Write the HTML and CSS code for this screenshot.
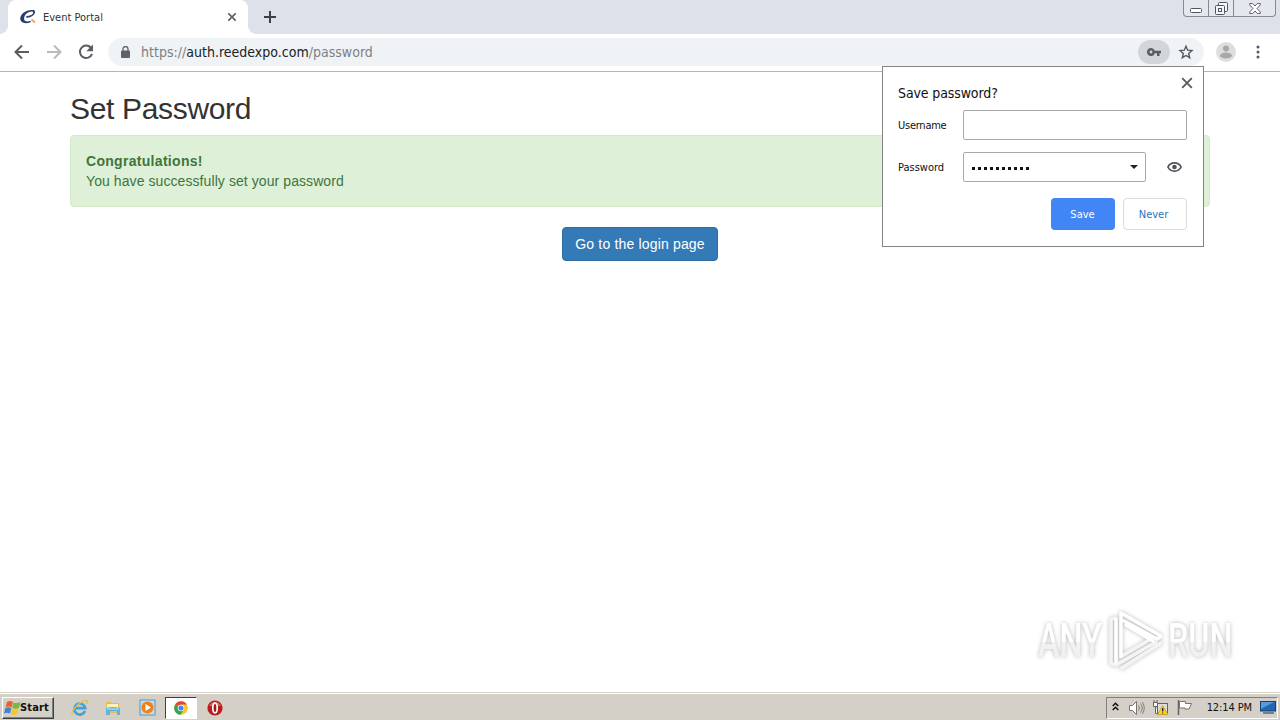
FILE: index.html
```html
<!DOCTYPE html>
<html lang="en">
<head>
    <meta charset="UTF-8">
    <title>Event Portal</title>
    <link rel="stylesheet" href="styles.css">
</head>
<body>
    <div class="tabstrip">
        <div class="tab">
            <svg class="favicon" width="16" height="16" viewBox="0 0 16 16">
                <path d="M13.500 1C8 .2 1 3.500.3 9c-.5 5 5.500 6.500 10.700 4l-.6-1.300c-3 1.300-6.400.8-6.300-2C4.200 5.500 8 2.500 12 2.500c2 0 1 2.500-1 3.600-1.500.8-3.300 1-4.400 1L6 8.600C11 9 15 6 15 3c0-1-.5-1.700-1.500-2z" fill="#263d70"/>
                <path d="M11.500 10.500l3.500 3" stroke="#f0a35a" stroke-width="1.800"/>
            </svg>
            <span class="tab-title">Event Portal</span>
            <svg class="tab-close" width="10" height="10" viewBox="0 0 10 10"><path d="M1.300 1.300l7.400 7.400M8.700 1.300L1.300 8.700" stroke="#5f6368" stroke-width="1.700"/></svg>
        </div>
        <svg class="new-tab" width="12" height="12" viewBox="0 0 12 12"><path d="M6 0v12M0 6h12" stroke="#3c4043" stroke-width="2"/></svg>
        <div class="window-buttons">
            <span class="win-min"><svg width="12" height="5" viewBox="0 0 12 5"><rect x=".5" y=".5" width="11" height="4" rx="1" fill="#fff" stroke="#50545c"/></svg></span>
            <span class="win-max"><svg width="13" height="13" viewBox="0 0 13 13" fill="#f5f6f8" stroke="#50545c"><rect x="3.500" y=".5" width="9" height="9" rx="1"/><rect x=".5" y="3.500" width="9" height="9" rx="1"/><rect x="3.500" y="6.500" width="3" height="3"/></svg></span>
            <span class="win-close"><svg width="12" height="11" viewBox="0 0 12 11"><path d="M.7.500h3L6 3 8.300.500h3v1.500L8 5.500l3.300 3.500v1.500h-3L6 8l-2.300 2.500h-3V9L4 5.500.7 2z" fill="#fff" stroke="#50545c" stroke-width=".9"/></svg></span>
        </div>
    </div>

    <div class="toolbar">
        <svg class="nav" width="24" height="24" viewBox="0 0 24 24"><path d="M19 12H6M12 5.500L5.500 12l6.500 6.500" fill="none" stroke="#5a5d61" stroke-width="2"/></svg>
        <svg class="nav" width="24" height="24" viewBox="0 0 24 24"><path d="M5 12h13M12 5.500l6.500 6.500-6.500 6.500" fill="none" stroke="#bababa" stroke-width="2"/></svg>
        <svg class="nav" width="24" height="24" viewBox="0 0 24 24"><path d="M17.200 8.200A6.200 6.200 0 1 0 18 13.800" fill="none" stroke="#5a5d61" stroke-width="2"/><path d="M19 4.500v6.700h-6.700z" fill="#5a5d61"/></svg>
        <div class="omnibox">
            <svg class="lock" width="10" height="13" viewBox="0 0 10 13"><rect x="1" y="4.500" width="9" height="7.500" rx="1" fill="#5f6368"/><path d="M3 5V3a2.500 2.500 0 0 1 5 0v2" fill="none" stroke="#5f6368" stroke-width="1.300"/></svg>
            <span class="url">https://<b>auth.reedexpo.com</b>/password</span>
            <span class="key">
                <svg width="14" height="8" viewBox="0 0 14 8"><path fill-rule="evenodd" d="M4 0a4 4 0 1 0 3.800 5.200H10V8h2.500V5.200H14V2.700H7.800A4 4 0 0 0 4 0zm0 2.600a1.400 1.400 0 1 1 0 2.800 1.400 1.400 0 0 1 0-2.800z" fill="#5a5d61"/></svg>
            </span>
            <svg class="star" width="16" height="16" viewBox="0 0 16 16"><path d="M8 2.200l1.700 4 4.300.4-3.300 2.900 1 4.200L8 11.500l-3.700 2.200 1-4.200L2 6.600l4.300-.4z" fill="none" stroke="#55585c" stroke-width="1.400"/></svg>
        </div>
        <svg class="avatar" width="20" height="20" viewBox="0 0 20 20"><circle cx="10" cy="10" r="10" fill="#dedede"/><circle cx="10" cy="6.500" r="3" fill="#a8a8a8"/><ellipse cx="10" cy="13.500" rx="6" ry="3" fill="#a8a8a8"/></svg>
        <svg class="menu" width="4" height="14" viewBox="0 0 4 14" fill="#55585c"><circle cx="2" cy="2" r="1.500"/><circle cx="2" cy="7" r="1.500"/><circle cx="2" cy="12" r="1.500"/></svg>
    </div>

    <main class="page">
        <div class="container">
            <h2>Set Password</h2>
            <div class="alert">
                <strong>Congratulations!</strong>
                <span>You have successfully set your password</span>
            </div>
            <a class="btn-login">Go to the login page</a>
        </div>
    </main>

    <!-- Save password bubble -->
    <div class="bubble">
        <svg class="bubble-close" width="12" height="12" viewBox="0 0 12 12"><path d="M1.200 1.200l9.600 9.600M10.800 1.200l-9.600 9.600" stroke="#55585c" stroke-width="1.800"/></svg>
        <div class="bubble-title">Save password?</div>
        <div class="field">
            <span class="label label-user">Username</span>
            <div class="box"></div>
        </div>
        <div class="field">
            <span class="label">Password</span>
            <div class="box box-pass">
                <div class="dots"><i></i><i></i><i></i><i></i><i></i><i></i><i></i><i></i><i></i><i></i></div>
                <svg width="8" height="4" viewBox="0 0 8 4"><path d="M0 0h8L4 4z" fill="#222"/></svg>
            </div>
            <svg class="eye" width="15" height="10" viewBox="0 0 15 10"><path d="M.9 5C2.200 2.300 4.700.9 7.500.9S12.800 2.300 14.100 5C12.800 7.700 10.300 9.100 7.500 9.100S2.200 7.700.9 5z" fill="#fff" stroke="#505357" stroke-width="1.700"/><circle cx="7.500" cy="5" r="2.300" fill="#505357"/></svg>
        </div>
        <div class="actions">
            <span class="btn save">Save</span>
            <span class="btn never">Never</span>
        </div>
    </div>

    <div class="watermark">
        <div class="wm-text"><span>ANY</span></div>
        <svg width="60" height="66" viewBox="0 0 60 66" fill="none" stroke-width="3.500" stroke-linejoin="round" stroke-linecap="round">
            <path d="M8 10L5 11.500v44l5 1.500L50 34M16 60l39-25M15 48.500L45 31" stroke="#f4f4f4"/>
            <path d="M15 48V5l40 23-4 3-33-18M10 54V11M20 17l27 16" stroke="#fff"/>
        </svg>
        <div class="wm-text"><span>RUN</span></div>
    </div>

    <div class="taskbar">
        <div class="start">
            <svg width="17" height="16" viewBox="0 0 17 16">
                <path d="M3 2Q5.500 0 9 2L7.600 7.500Q4.500 5.600 1.400 7.500z" fill="#e8632b"/>
                <path d="M9.600 2.400q3.200 1.600 7-.7L15 7.700q-3.500 1.800-6.800.2z" fill="#79b843"/>
                <path d="M1.200 8.200q3.200-1.700 6.200 0L6 13.500Q3 11.800 0 13.500z" fill="#4284cf"/>
                <path d="M8 8.500q3.300 1.700 6.800-.1l-1.500 5.600q-3.300 1.900-6.700 0z" fill="#f7c52f"/>
            </svg>
            <span>Start</span>
        </div>
        <div class="quick">
            <span class="app">
                <svg width="17" height="17" viewBox="0 0 17 17"><path d="M14 12A5.500 5.500 0 1 1 14.300 9.200H4" fill="none" stroke="#3da3df" stroke-width="2.700"/><path d="M1.500 15.500C-1 12 10 1 16 1.500c1 .5.500 2-.5 3.500" fill="none" stroke="#e9bd43" stroke-width="1.300"/></svg>
            </span>
            <span class="app">
                <svg width="16" height="16" viewBox="0 0 16 16"><path d="M1 2h5l1 1h7v10H1z" fill="#dfbf5c"/><path d="M2 4h11v4H2z" fill="#fff2b2"/><path d="M1 8q7-2 14 0v7h-3v-4H5v4H1z" fill="#63b3dc"/><path d="M2 9h12" stroke="#b9e7f7"/></svg>
            </span>
            <span class="app">
                <svg width="17" height="17" viewBox="0 0 17 17"><rect x="1" y="1" width="15" height="15" fill="#c3dcec" stroke="#5a94bf"/><circle cx="8.500" cy="8.500" r="6" fill="#ee8118"/><path d="M6.500 5v7l5.500-3.500z" fill="#fff"/></svg>
            </span>
            <span class="app active">
                <svg width="14" height="14" viewBox="0 0 14 14"><circle cx="7" cy="7" r="6.800" fill="#f6c62f"/><path d="M7 7L1.100 3.600A6.800 6.800 0 0 0 6.500 13.800L9.500 9z" fill="#36a552"/><path d="M7 7L1.100 3.600A6.800 6.800 0 0 1 12.900 3.600H7z" fill="#df4938"/><circle cx="7" cy="7" r="3.300" fill="#fff"/><circle cx="7" cy="7" r="2.600" fill="#4a87e5"/></svg>
            </span>
            <span class="app">
                <svg width="16" height="16" viewBox="0 0 16 16"><circle cx="8" cy="8" r="7.600" fill="#b81e1e"/><path d="M2 6a6.500 6.500 0 0 1 12 0z" fill="#d96158"/><ellipse cx="8" cy="8" rx="2.200" ry="4.800" fill="#a31616" stroke="#fff" stroke-width="1.700"/></svg>
            </span>
        </div>
        <div class="tray">
            <svg class="chevron" width="7" height="9" viewBox="0 0 7 9"><path d="M.7 4l2.800-2.800L6.300 4M.7 8l2.800-2.800L6.300 8" fill="none" stroke="#111" stroke-width="1.500"/></svg>
            <svg class="volume" width="17" height="16" viewBox="0 0 17 16"><path d="M1.500 5.500h3l4-4v13l-4-4h-3z" fill="#fff" stroke="#77736d"/><path d="M10.500 5.500q2 2.500 0 5M12.500 3.500q3.500 4.500 0 9M14.300 2q4 6 0 12" fill="none" stroke="#85817a"/></svg>
            <svg class="network" width="17" height="16" viewBox="0 0 17 16"><path d="M2 0v3M5 0v3" stroke="#666"/><path d="M1.500 2.500h4v4h-4zM3.500 6.500v7H6" fill="#fff" stroke="#66635e"/><rect x="5.500" y="3.500" width="10" height="9" fill="#ddd" stroke="#66635e"/><path d="M10.500 5.500L16 14.500H5.500z" fill="#f8d52b" stroke="#c2940d" stroke-width=".7"/><path d="M10.700 8v3.500M10.700 12.500v1" stroke="#222" stroke-width="1.300"/></svg>
            <svg class="flag" width="16" height="15" viewBox="0 0 16 15"><path d="M1.500 0v15" stroke="#66635e" stroke-width="1.500"/><path d="M2.500 1.500h6v2h6l-2.500 5.500H8V8H2.500z" fill="#fff" stroke="#77736d"/></svg>
            <span class="clock">12:14 PM</span>
            <svg class="desktop" width="16" height="13" viewBox="0 0 16 13"><rect x=".5" y=".5" width="15" height="9.500" fill="#2367b2" stroke="#173f78"/><path d="M1 1h13L1 8z" fill="#559bdd"/><path d="M3 12h11" stroke="#5b6470" stroke-width="1.500"/></svg>
        </div>
    </div>
</body>
</html>
```
FILE: styles.css
```css
* {
    box-sizing: border-box;
}

body {
    display: flex;
    flex-direction: column;
    width: 1280px;
    height: 720px;
    margin: 0;
    overflow: hidden;
    background: #fff;
    color: #111;
    font-family: "DejaVu Sans Condensed", "DejaVu Sans", sans-serif;
    font-size: 11px;
}

svg {
    display: block;
    flex: none;
}

span {
    white-space: nowrap;
}

/* Browser */
.tabstrip {
    display: flex;
    align-items: center;
    height: 34px;
    padding-left: 8px;
    background: #dee1e9;
}

.tab {
    position: relative;
    display: flex;
    align-items: center;
    width: 240px;
    height: 34px;
    padding: 0 11px 0 12px;
    border-radius: 8px 8px 0 0;
    background: #fff;
}

.tab::before,
.tab::after {
    content: "";
    position: absolute;
    bottom: 0;
    width: 8px;
    height: 8px;
}

.tab::before {
    left: -8px;
    background: radial-gradient(circle at 0 0, #dee1e9 7.5px, #fff 8px);
}

.tab::after {
    right: -8px;
    background: radial-gradient(circle at 100% 0, #dee1e9 7.5px, #fff 8px);
}

.tab-title {
    margin-left: 7px;
    color: #333;
}

.tab-close {
    margin-left: auto;
}

.new-tab {
    margin-left: 16px;
}

.window-buttons {
    display: flex;
    align-self: flex-start;
    width: 93px;
    height: 17px;
    margin: 0 4px 0 auto;
    border: 1px solid #858992;
    border-top: 0;
    border-radius: 0 0 4px 4px;
    background: #e4e7ed;
}

.window-buttons span {
    display: flex;
    align-items: center;
    justify-content: center;
    padding-top: 1px;
}

.win-min {
    width: 25px;
    border-right: 1px solid #858992;
}

.win-min svg {
    margin-top: 4px;
}

.win-max {
    width: 25px;
    border-right: 1px solid #858992;
}

.win-close {
    flex: 1;
}

.toolbar {
    display: flex;
    align-items: center;
    height: 38px;
    padding: 0 20px 2px 10px;
    border-bottom: 1px solid #b5b5b5;
}

.nav {
    margin-right: 8px;
}

.omnibox {
    display: flex;
    align-items: center;
    width: 1096px;
    height: 28px;
    margin-left: 2px;
    padding: 0 14px 0 12px;
    border-radius: 14px;
    background: #f0f3f5;
}

.lock {
    margin-top: 1px;
}

.url {
    margin-left: 11px;
    color: #7c8085;
    font-size: 14px;
    letter-spacing: 0.01px;
}

.url b {
    color: #202124;
    font-weight: normal;
}

.key {
    display: flex;
    align-items: center;
    justify-content: center;
    width: 32px;
    height: 24px;
    margin-left: auto;
    border-radius: 12px;
    background: #d3d6d8;
}

.star {
    margin-left: 8px;
    margin-right: -4px;
}

.avatar {
    margin-left: 12px;
}

.menu {
    margin-left: auto;
}

/* Page */
.page {
    flex: 1;
    font-family: "Liberation Sans", Arial, sans-serif;
}

.container {
    display: flex;
    flex-direction: column;
    width: 1140px;
    margin: 0 auto;
}

h2 {
    margin: 20px 0 10px;
    color: #333;
    font-size: 30px;
    font-weight: normal;
    letter-spacing: -0.33px;
    line-height: 33px;
}

.alert {
    display: flex;
    flex-direction: column;
    height: 72px;
    padding: 15px;
    border: 1px solid #d6e9c6;
    border-radius: 4px;
    background: #dff0d8;
    color: #3c763d;
    font-size: 14px;
    line-height: 20px;
}

.alert strong {
    letter-spacing: 0.3px;
}

.alert span {
    letter-spacing: 0.08px;
}

.btn-login {
    align-self: center;
    height: 34px;
    margin-top: 20px;
    padding: 6px 12px;
    border: 1px solid #2e6da4;
    border-radius: 4px;
    background: #337ab7;
    color: #fff;
    font-size: 14px;
    letter-spacing: 0.17px;
    line-height: 20px;
}

/* Bubble */
.bubble {
    position: absolute;
    top: 66px;
    left: 882px;
    width: 322px;
    height: 181px;
    padding: 18px 16px 0 15px;
    border: 1px solid #858585;
    background: #fff;
}

.bubble-close {
    position: absolute;
    top: 10px;
    right: 10px;
}

.bubble-title {
    margin-bottom: 9px;
    font-size: 14px;
    letter-spacing: -0.12px;
    line-height: 16px;
}

.field {
    display: flex;
    align-items: center;
    height: 30px;
    margin-bottom: 12px;
}

.label {
    width: 65px;
}

.label-user {
    letter-spacing: -0.25px;
}

.box {
    flex: 1;
    height: 30px;
    border: 1px solid #a9a9a9;
    border-radius: 2px;
}

.box-pass {
    display: flex;
    flex: none;
    align-items: center;
    justify-content: space-between;
    width: 183px;
    padding: 0 7px 0 8px;
}

.dots {
    display: flex;
    gap: 3px;
    margin-top: 3px;
}

.dots i {
    width: 3px;
    height: 3px;
    background: #111;
}

.eye {
    margin-left: 21px;
}

.actions {
    display: flex;
    justify-content: flex-end;
    gap: 8px;
    margin-top: 16px;
}

.btn {
    width: 64px;
    height: 32px;
    border-radius: 4px;
    line-height: 33px;
    text-align: center;
}

.save {
    padding-right: 1px;
    background: #4285f4;
    color: #fff;
}

.never {
    padding-right: 3px;
    border: 1px solid #dadce0;
    color: #2672c4;
    line-height: 31px;
}

/* Watermark */
.watermark {
    position: absolute;
    top: 608px;
    left: 1038px;
    display: flex;
    align-items: center;
    width: 196px;
    height: 66px;
    filter: drop-shadow(0 0 2px rgba(0, 0, 0, 0.28));
}

.wm-text {
    width: 66px;
    font-family: Roboto, sans-serif;
    font-size: 49px;
    font-weight: 500;
    line-height: 66px;
}

.wm-text span {
    display: inline-block;
    background: linear-gradient(#fff 52%, #f1f1f1 52%);
    -webkit-background-clip: text;
    background-clip: text;
    color: transparent;
    transform: scaleX(0.66);
    transform-origin: 0 50%;
}

.watermark svg {
    margin: 0 2px;
}

/* Taskbar */
.taskbar {
    display: flex;
    align-items: center;
    height: 28px;
    padding: 2px 2px 0 2px;
    border-top: 1px solid #d4d0c8;
    box-shadow: inset 0 1px #fff;
    background: #d4d0c8;
}

.start {
    display: flex;
    align-items: center;
    width: 52px;
    height: 22px;
    padding-left: 1px;
    border: 1px solid;
    border-color: #fff #404040 #404040 #fff;
    box-shadow: inset -1px -1px #808080;
    font-size: 11px;
    font-weight: bold;
}

.start span {
    margin-left: -1px;
    letter-spacing: 0.15px;
}

.quick {
    display: flex;
    gap: 2px;
    margin-left: 9px;
}

.app {
    display: flex;
    align-items: center;
    justify-content: center;
    width: 32px;
    height: 22px;
}

.active {
    border: 1px solid;
    border-color: #404040 #fff #fff #404040;
    background: #fff;
}

.tray {
    display: flex;
    align-items: center;
    width: 172px;
    height: 22px;
    margin-left: auto;
    padding: 0 1px 0 5px;
    border: 1px solid;
    border-color: #808080 #fff #fff #808080;
}

.chevron {
    margin-top: -3px;
}

.volume {
    margin-left: 9px;
}

.network {
    margin-left: 7px;
}

.flag {
    margin-left: 8px;
}

.clock {
    margin-left: auto;
    margin-right: 8px;
    letter-spacing: -0.1px;
}
```
